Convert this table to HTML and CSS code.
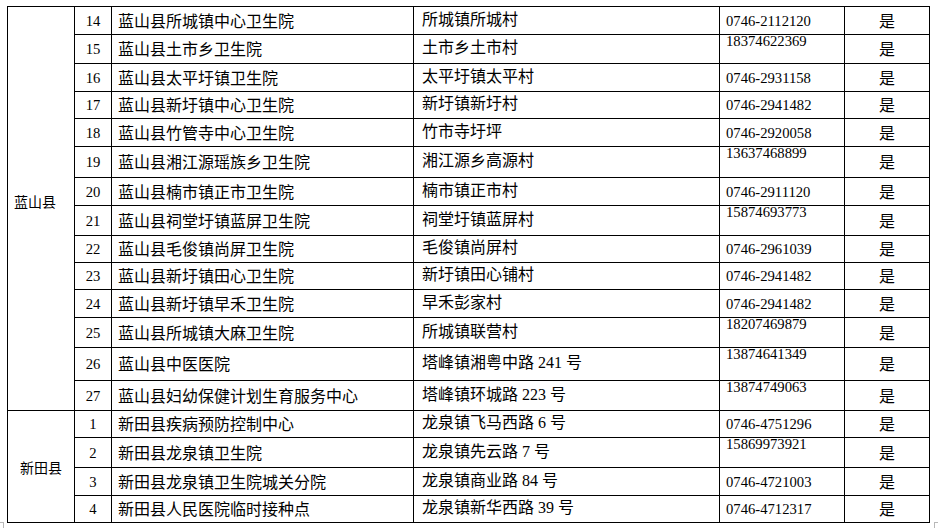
FILE: index.html
```html
<!DOCTYPE html>
<html lang="zh-CN">
<head>
<meta charset="utf-8">
<title>接种点</title>
<link rel="stylesheet" href="styles.css">
</head>
<body>
<div class="page">
<table class="sites">
<colgroup>
<col class="c-county"><col class="c-no"><col class="c-name"><col class="c-addr"><col class="c-tel"><col class="c-yes">
</colgroup>
<tbody>
<tr class="h28"><td class="county lan" rowspan="14">蓝山县</td><td class="no">14</td><td class="name">蓝山县所城镇中心卫生院</td><td class="addr">所城镇所城村</td><td class="tel">0746-2112120</td><td class="yes">是</td></tr>
<tr class="h29"><td class="no">15</td><td class="name">蓝山县土市乡卫生院</td><td class="addr">土市乡土市村</td><td class="tel top">18374622369</td><td class="yes">是</td></tr>
<tr class="h28"><td class="no">16</td><td class="name">蓝山县太平圩镇卫生院</td><td class="addr">太平圩镇太平村</td><td class="tel">0746-2931158</td><td class="yes">是</td></tr>
<tr class="h27"><td class="no">17</td><td class="name">蓝山县新圩镇中心卫生院</td><td class="addr">新圩镇新圩村</td><td class="tel">0746-2941482</td><td class="yes">是</td></tr>
<tr class="h28"><td class="no">18</td><td class="name">蓝山县竹管寺中心卫生院</td><td class="addr">竹市寺圩坪</td><td class="tel">0746-2920058</td><td class="yes">是</td></tr>
<tr class="h31"><td class="no">19</td><td class="name">蓝山县湘江源瑶族乡卫生院</td><td class="addr">湘江源乡高源村</td><td class="tel top">13637468899</td><td class="yes">是</td></tr>
<tr class="h28"><td class="no">20</td><td class="name">蓝山县楠市镇正市卫生院</td><td class="addr">楠市镇正市村</td><td class="tel">0746-2911120</td><td class="yes">是</td></tr>
<tr class="h30"><td class="no">21</td><td class="name">蓝山县祠堂圩镇蓝屏卫生院</td><td class="addr">祠堂圩镇蓝屏村</td><td class="tel top">15874693773</td><td class="yes">是</td></tr>
<tr class="h27"><td class="no">22</td><td class="name">蓝山县毛俊镇尚屏卫生院</td><td class="addr">毛俊镇尚屏村</td><td class="tel">0746-2961039</td><td class="yes">是</td></tr>
<tr class="h27"><td class="no">23</td><td class="name">蓝山县新圩镇田心卫生院</td><td class="addr">新圩镇田心铺村</td><td class="tel">0746-2941482</td><td class="yes">是</td></tr>
<tr class="h28"><td class="no">24</td><td class="name">蓝山县新圩镇早禾卫生院</td><td class="addr">早禾彭家村</td><td class="tel">0746-2941482</td><td class="yes">是</td></tr>
<tr class="h30"><td class="no">25</td><td class="name">蓝山县所城镇大麻卫生院</td><td class="addr">所城镇联营村</td><td class="tel top">18207469879</td><td class="yes">是</td></tr>
<tr class="h33"><td class="no">26</td><td class="name">蓝山县中医医院</td><td class="addr">塔峰镇湘粤中路 241 号</td><td class="tel top">13874641349</td><td class="yes">是</td></tr>
<tr class="h30"><td class="no">27</td><td class="name">蓝山县妇幼保健计划生育服务中心</td><td class="addr">塔峰镇环城路 223 号</td><td class="tel top">13874749063</td><td class="yes">是</td></tr>
<tr class="h27"><td class="county xin" rowspan="4">新田县</td><td class="no">1</td><td class="name">新田县疾病预防控制中心</td><td class="addr">龙泉镇飞马西路 6 号</td><td class="tel">0746-4751296</td><td class="yes">是</td></tr>
<tr class="h30"><td class="no">2</td><td class="name">新田县龙泉镇卫生院</td><td class="addr">龙泉镇先云路 7 号</td><td class="tel top">15869973921</td><td class="yes">是</td></tr>
<tr class="h28"><td class="no">3</td><td class="name">新田县龙泉镇卫生院城关分院</td><td class="addr">龙泉镇商业路 84 号</td><td class="tel">0746-4721003</td><td class="yes">是</td></tr>
<tr class="h27"><td class="no">4</td><td class="name">新田县人民医院临时接种点</td><td class="addr">龙泉镇新华西路 39 号</td><td class="tel">0746-4712317</td><td class="yes">是</td></tr>
</tbody>
</table>
<span class="mark mark-left"></span>
<span class="mark mark-right"></span>
</div>
</body>
</html>
```

FILE: styles.css
```css
html, body {
  margin: 0;
  padding: 0;
  background: #ffffff;
}

.page {
  position: relative;
  width: 938px;
  height: 528px;
  overflow: hidden;
  padding: 6px 0 0 7px;
  box-sizing: border-box;
}

.sites {
  border-collapse: collapse;
  table-layout: fixed;
  width: 923px;
  font-family: "Liberation Serif", "Noto Sans CJK SC", serif;
  color: #000;
}

.c-county { width: 67px; }
.c-no { width: 37px; }
.c-name { width: 302px; }
.c-addr { width: 306px; }
.c-tel { width: 125px; }
.c-yes { width: 85px; }

.sites td {
  border: 1px solid #000;
  padding: 0;
  vertical-align: middle;
  white-space: nowrap;
  overflow: hidden;
  line-height: 18px;
}

.h27 { height: 27px; }
.h28 { height: 28px; }
.h29 { height: 29px; }
.h30 { height: 30px; }
.h31 { height: 31px; }
.h33 { height: 33px; }

.county {
  font-family: "Noto Sans CJK SC", sans-serif;
  font-size: 14px;
}

.county.lan {
  text-align: left;
  padding: 0 0 16px 6px !important;
}

.county.xin {
  text-align: center;
}

.no {
  text-align: center;
  font-size: 14.67px;
}

.name {
  font-family: "Noto Sans CJK SC", sans-serif;
  font-size: 16px;
  padding-left: 6px !important;
  padding-bottom: 2px !important;
}

.addr {
  font-size: 16px;
  padding-left: 8px !important;
  padding-bottom: 2px !important;
}

.tel {
  font-size: 14.67px;
  padding-left: 6px !important;
}

.tel.top {
  vertical-align: top;
  line-height: 12px;
}

.yes {
  text-align: center;
  font-family: "Noto Sans CJK SC", sans-serif;
  font-size: 16px;
  padding-bottom: 2px !important;
}

.mark {
  position: absolute;
  width: 4px;
  height: 6px;
  border-top: 1px solid #b8b8b8;
  top: 522px;
}

.mark-left {
  left: 0;
  width: 3px;
  border-right: 1px solid #b8b8b8;
}

.mark-right {
  left: 934px;
  border-left: 1px solid #b8b8b8;
}
```
